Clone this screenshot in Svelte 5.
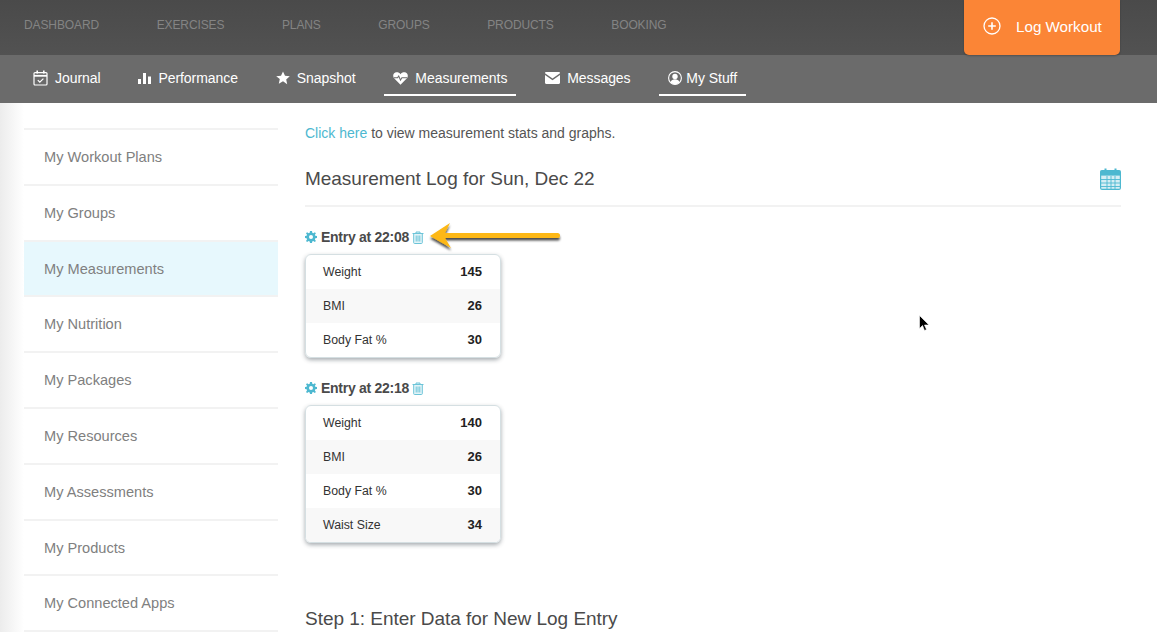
<script lang="ts">
    type Entry = { time: string; rows: [string, number][] };

    const topLinks = ["DASHBOARD", "EXERCISES", "PLANS", "GROUPS", "PRODUCTS", "BOOKING"];

    const subLinks = [
        { label: "Journal", icon: "journal" },
        { label: "Performance", icon: "bars" },
        { label: "Snapshot", icon: "star" },
        { label: "Measurements", icon: "heart", active: true },
        { label: "Messages", icon: "mail" },
        { label: "My Stuff", icon: "user", active: true },
    ];

    const sideLinks = [
        "My Workout Plans",
        "My Groups",
        "My Measurements",
        "My Nutrition",
        "My Packages",
        "My Resources",
        "My Assessments",
        "My Products",
        "My Connected Apps",
    ];

    const entries: Entry[] = [
        { time: "22:08", rows: [["Weight", 145], ["BMI", 26], ["Body Fat %", 30]] },
        { time: "22:18", rows: [["Weight", 140], ["BMI", 26], ["Body Fat %", 30], ["Waist Size", 34]] },
    ];
</script>

<div class="page">
    <header class="top">
        <nav class="top-links">
            {#each topLinks as link}
                <span>{link}</span>
            {/each}
        </nav>
        <div class="log-btn">
            <svg width="18" height="18" viewBox="0 0 18 18" fill="none" stroke="#fff">
                <circle cx="9" cy="9" r="8" stroke-width="1.3" />
                <path d="M9 5.2v7.6M5.2 9h7.6" stroke-width="1.6" />
            </svg>
            <span>Log Workout</span>
        </div>
    </header>

    <nav class="sub">
        {#each subLinks as link}
            <div class="sub-link" class:active={link.active}>
                {#if link.icon === "journal"}
                    <svg width="15" height="16" viewBox="0 0 15 16" fill="none" stroke="#fff" stroke-width="1.2">
                        <rect x="1" y="2.6" width="13" height="12.4" rx="1" />
                        <path d="M1 5.8h13" stroke-width="1.8" />
                        <path d="M4.2 .6v3M10.8 .6v3" stroke-width="1.6" />
                        <path d="M4.8 10.2l2 2 3.6-3.6" />
                    </svg>
                {:else if link.icon === "bars"}
                    <svg width="13" height="11" viewBox="0 0 13 11" fill="#fff">
                        <rect x="0" y="6" width="3" height="5" />
                        <rect x="5" y="0" width="3" height="11" />
                        <rect x="10" y="3.5" width="3" height="7.5" />
                    </svg>
                {:else if link.icon === "star"}
                    <svg width="14" height="14" viewBox="0 0 14 14" fill="#fff">
                        <path d="M7 .4l2 4.4 4.8.5-3.6 3.2 1 4.7L7 10.3l-4.2 2.4 1-4.7L.2 5.3 5 4.8z" />
                    </svg>
                {:else if link.icon === "heart"}
                    <svg width="15" height="13" viewBox="0 0 16 14">
                        <path fill="#fff" d="M8 13.6L1.6 7.4C-.6 5-.2 1.8 2 .8 4.2-.2 6.6.4 8 2.4 9.4.4 11.8-.2 14 .8c2.2 1 2.6 4.2.4 6.6z" />
                        <path fill="none" stroke="#6b6b6b" stroke-width="1.1" d="M.8 6.3h4l1.3-2 1.9 4.4 1.5-2.4h5.7" />
                    </svg>
                {:else if link.icon === "mail"}
                    <svg width="15" height="12" viewBox="0 0 15 12" fill="#fff">
                        <path d="M1.2 0h12.6c.7 0 1.2.5 1.2 1.2L7.5 6.4 0 1.2C0 .5.5 0 1.2 0z" />
                        <path d="M0 3l7.5 5.2L15 3v7.8c0 .7-.5 1.2-1.2 1.2H1.2C.5 12 0 11.5 0 10.8z" />
                    </svg>
                {:else}
                    <svg class="user-icon" width="14" height="14" viewBox="0 0 14 14">
                        <circle cx="7" cy="7" r="6.4" fill="none" stroke="#fff" stroke-width="1.1" />
                        <circle cx="7" cy="5.4" r="2.7" fill="#fff" />
                        <path fill="#fff" d="M2.6 11.2c.6-2.2 2.4-3 4.4-3s3.8.8 4.400 3C10.300 12.600 8.700 13.200 7 13.200s-3.300-.6-4.400-2z" />
                    </svg>
                {/if}
                <span>{link.label}</span>
            </div>
        {/each}
    </nav>

    <div class="body">
        <aside class="side">
            {#each sideLinks as link}
                <div class="side-link" class:current={link === "My Measurements"}>{link}</div>
            {/each}
        </aside>

        <main class="content">
            <p class="intro"><span class="link">Click here</span> to view measurement stats and graphs.</p>

            <div class="log-head">
                <h2>Measurement Log for Sun, Dec 22</h2>
                <svg width="21" height="22" viewBox="0 0 21 22">
                    <rect x=".6" y="2.6" width="19.8" height="18.8" rx="1.5" fill="#d5eef4" stroke="#4db8d0" stroke-width="1.2" />
                    <rect x=".6" y="2.6" width="19.8" height="5" fill="#4db8d0" />
                    <path d="M5.5 .5v4M15.5 .5v4" stroke="#4db8d0" stroke-width="2" />
                    <path d="M7 8v13M11 8v13M15 8v13M1 11.5h19M1 15h19M1 18.5h19" stroke="#4db8d0" stroke-width=".9" />
                </svg>
            </div>

            {#each entries as entry}
                <section class="entry">
                    <div class="entry-head">
                        <svg width="12" height="12" viewBox="0 0 12 12">
                            <path fill="#4db8d0" fill-rule="evenodd" d="M5 0h2l.3 1.7 1.1.5 1.4-1 1.100 1-1 1.500.4 1.100L12 5v2l-1.700.3-.4 1.100 1 1.500-1.100 1.100-1.500-1-1.100.4L7 12H5l-.3-1.600-1.100-.4-1.500 1-1.100-1.100 1-1.500-.4-1.100L0 7V5l1.600-.2.400-1.100-1-1.500 1.100-1 1.500 1 1.100-.5zM6 4a2 2 0 1 0 0 4 2 2 0 0 0 0-4z" />
                        </svg>
                        <strong>Entry at {entry.time}</strong>
                        <svg class="trash" width="12" height="13" viewBox="0 0 12 13" fill="#e3f4f8" stroke="#6cc4d8" stroke-width="1">
                            <path d="M.5 2.5h11M4 2.5V1h4v1.500M1.700 2.500v9.200c0 .5.300.8.800.8h7c.5 0 .8-.3.800-.8V2.500z" />
                            <path d="M4.200 4.500v6M6 4.500v6M7.800 4.500v6" />
                        </svg>
                    </div>
                    <div class="card">
                        {#each entry.rows as row}
                            <div class="row">
                                <span>{row[0]}</span>
                                <b>{row[1]}</b>
                            </div>
                        {/each}
                    </div>
                </section>
            {/each}

            <h2 class="step">Step 1: Enter Data for New Log Entry</h2>
        </main>
    </div>

    <!-- annotation arrow drawn over the screenshot -->
    <svg class="arrow" width="140" height="36" viewBox="0 0 140 36">
        <defs>
            <filter id="arrow-shadow" x="-10%" y="-30%" width="120%" height="170%">
                <feDropShadow dx="0" dy="2.5" stdDeviation="1.2" flood-color="#000" flood-opacity=".7" />
            </filter>
        </defs>
        <path
            fill="#fdb813"
            filter="url(#arrow-shadow)"
            d="M4 18L24 5 19 15H131.5a2.5 2.5 0 0 1 0 5H19L25 30z"
        />
    </svg>

    <svg class="cursor" width="11" height="17" viewBox="0 0 11 17">
        <path d="M.5 .5v13l3-3 2 5 2-1-2-4.500h4.500z" fill="#000" stroke="#fff" stroke-width=".6" />
    </svg>
</div>

<style>
    :global(body) {
        margin: 0;
        background: #fff;
    }

    .page {
        position: relative;
        height: 634px;
        overflow: hidden;
        font-family: "Liberation Sans", Arial, sans-serif;
        color: #444;
    }

    .top {
        height: 55px;
        display: flex;
        justify-content: space-between;
        padding: 0 37px 0 24px;
        background: linear-gradient(#4a4a4a, #525252);
    }

    .top-links {
        display: flex;
        gap: 57.5px;
        align-items: center;
        height: 49px;
        font-size: 12px;
        letter-spacing: -0.1px;
        color: #848484;
    }

    .log-btn {
        width: 156px;
        height: 55px;
        box-sizing: border-box;
        padding: 0 0 3px 19px;
        display: flex;
        align-items: center;
        gap: 15px;
        background: #fb8536;
        border-radius: 0 0 5px 5px;
        color: #fff;
        font-size: 15.2px;
        position: relative;
        z-index: 1;
        box-shadow: 0 1px 2px rgba(0, 0, 0, 0.25);
    }

    .sub {
        height: 48px;
        display: flex;
        padding-left: 24px;
        background: #6b6b6b;
    }

    .sub-link {
        display: flex;
        align-items: center;
        gap: 7px;
        box-sizing: border-box;
        height: 41px;
        padding: 7px 9px 0;
        margin-right: 19.8px;
        border-bottom: 2px solid transparent;
        color: #fff;
        font-size: 14px;
        letter-spacing: -0.05px;
    }

    .sub-link.active {
        border-bottom-color: #fff;
    }

    .user-icon {
        margin-right: -3px;
    }

    .body {
        display: flex;
        padding-left: 24px;
        background: linear-gradient(90deg, #ececec, #fff 24px);
    }

    .side {
        width: 254px;
        margin-top: 25px;
        flex: none;
        background: #fff;
    }

    .side-link {
        height: 53.8px;
        line-height: 55.8px;
        padding-left: 20px;
        border-top: 2px solid #f2f2f2;
        font-size: 14.6px;
        color: #808080;
    }

    .side-link:last-child {
        border-bottom: 2px solid #f2f2f2;
    }

    .side-link.current {
        background: #e7f8fd;
    }

    .content {
        flex: 1;
        background: #fff;
        padding: 0 36px 0 27px;
    }

    .intro {
        margin: 21px 0 0;
        font-size: 14px;
        line-height: 18px;
        color: #555;
    }

    .link {
        color: #4db8d0;
    }

    .log-head {
        display: flex;
        justify-content: space-between;
        align-items: center;
        height: 52px;
        padding-top: 1px;
        margin-top: 10px;
        border-bottom: 2px solid #f2f2f2;
    }

    h2 {
        margin: 0;
        font-size: 19px;
        font-weight: 400;
        letter-spacing: -0.03px;
        color: #4a4a4a;
    }

    .entry {
        width: 196px;
        margin-bottom: 21px;
    }

    .log-head + .entry {
        margin-top: 21px;
    }

    .entry-head {
        display: flex;
        align-items: center;
        gap: 4px;
        height: 18px;
        font-size: 14px;
        letter-spacing: -0.27px;
        color: #4a4a4a;
    }

    .trash {
        margin-left: -1px;
    }

    .card {
        margin-top: 8px;
        border-radius: 6px;
        overflow: hidden;
        border: 1px solid #d5dfe2;
        box-shadow: 0 2px 4px rgba(60, 70, 80, 0.45);
    }

    .row {
        display: flex;
        justify-content: space-between;
        align-items: baseline;
        height: 34px;
        line-height: 34px;
        padding: 0 18px 0 17px;
        font-size: 12.3px;
        color: #333;
    }

    .row:nth-child(even) {
        background: #f8f8f8;
    }

    .row b {
        font-size: 13px;
        color: #222;
    }

    .step {
        margin-top: 65px;
    }

    .arrow {
        position: absolute;
        left: 426px;
        top: 218px;
    }

    .cursor {
        position: absolute;
        left: 919px;
        top: 315px;
    }
</style>
